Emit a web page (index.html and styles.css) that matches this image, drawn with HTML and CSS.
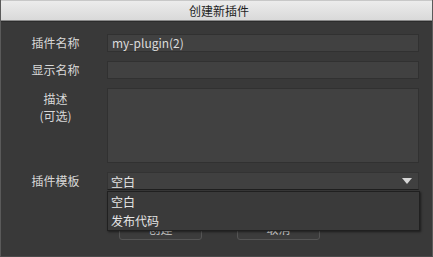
FILE: index.html
```html
<!DOCTYPE html>
<html lang="zh">
  <head>
    <meta charset="UTF-8" />
    <meta name="viewport" content="width=device-width, initial-scale=1.0" />
    <title>创建新插件</title>
    <link rel="stylesheet" href="styles.css">
  </head>
  <body>
    <div class="window">
      <div class="titlebar">创建新插件</div>
      <div class="form">
        <label class="label">插件名称</label>
        <div class="input">my-plugin(2)</div>

        <label class="label">显示名称</label>
        <div class="input"></div>

        <label class="label label-top">描述<br>(可选)</label>
        <div class="input textarea"></div>

        <label class="label">插件模板</label>
        <div class="select">
          <span>空白</span>
          <svg class="arrow" width="10" height="6" viewBox="0 0 10 6">
            <path d="M0 0 H10 L5 6 Z" fill="#d6d6d6" />
          </svg>
          <div class="dropdown">
            <div class="option">空白</div>
            <div class="option">发布代码</div>
          </div>
        </div>
      </div>
      <div class="buttons">
        <div class="button">创建</div>
        <div class="button">取消</div>
      </div>
    </div>
  </body>
</html>
```

FILE: styles.css
```css
html, body {
  margin: 0;
  padding: 0;
  background: #393939;
}

.window {
  width: 433px;
  height: 257px;
  box-sizing: border-box;
  border-left: 1px solid #5a5a5a;
  border-right: 1px solid #5a5a5a;
  border-bottom: 1px solid #4a4a4a;
  font-family: "Noto Sans CJK SC", "Noto Sans", sans-serif;
  font-size: 12px;
  color: #d8d8d8;
  overflow: hidden;
}

.titlebar {
  height: 19px;
  line-height: 19px;
  text-align: center;
  padding-left: 5px;
  color: #1e1e1e;
  background: linear-gradient(#ececec, #d9d9d9);
  border-top: 1px solid #c8c8c8;
  border-bottom: 1px solid #8a8a8a;
  box-shadow: 0 1px 0 #2c2c2c;
}

.form {
  display: grid;
  grid-template-columns: 106px 312px;
  grid-template-rows: 18px 18px 75px 18px;
  row-gap: 9px;
  padding-top: 13px;
}

.label {
  text-align: center;
  padding-left: 3px;
  line-height: 18px;
}

.label-top {
  line-height: 17px;
  padding-top: 2px;
}

.input {
  box-sizing: border-box;
  background: #414141;
  border: 1px solid #313131;
  padding-left: 4px;
  line-height: 16px;
  color: #dcdcdc;
}

.select {
  position: relative;
  box-sizing: border-box;
  display: flex;
  align-items: center;
  justify-content: space-between;
  background: #404040;
  border: 1px solid #333;
  border-bottom-color: #1f1f1f;
  padding: 0 6px 0 3px;
  color: #e4e4e4;
}

.arrow {
  display: block;
}

.dropdown {
  position: absolute;
  top: 18px;
  left: -1px;
  width: 313px;
  height: 40px;
  box-sizing: border-box;
  background: #3a3a3a;
  border: 1px solid #202020;
  box-shadow: 1px 1px 2px rgba(0, 0, 0, 0.5);
  z-index: 2;
}

.option {
  height: 19px;
  line-height: 19px;
  padding-left: 3px;
  color: #e6e6e6;
}

.buttons {
  display: flex;
  justify-content: center;
  gap: 35px;
  padding-left: 6px;
  margin-top: 28px;
}

.button {
  width: 83px;
  height: 22px;
  box-sizing: border-box;
  line-height: 20px;
  text-align: center;
  background: #3c3c3c;
  border: 1px solid #555;
  border-radius: 3px;
  color: #cfcfcf;
}
```
